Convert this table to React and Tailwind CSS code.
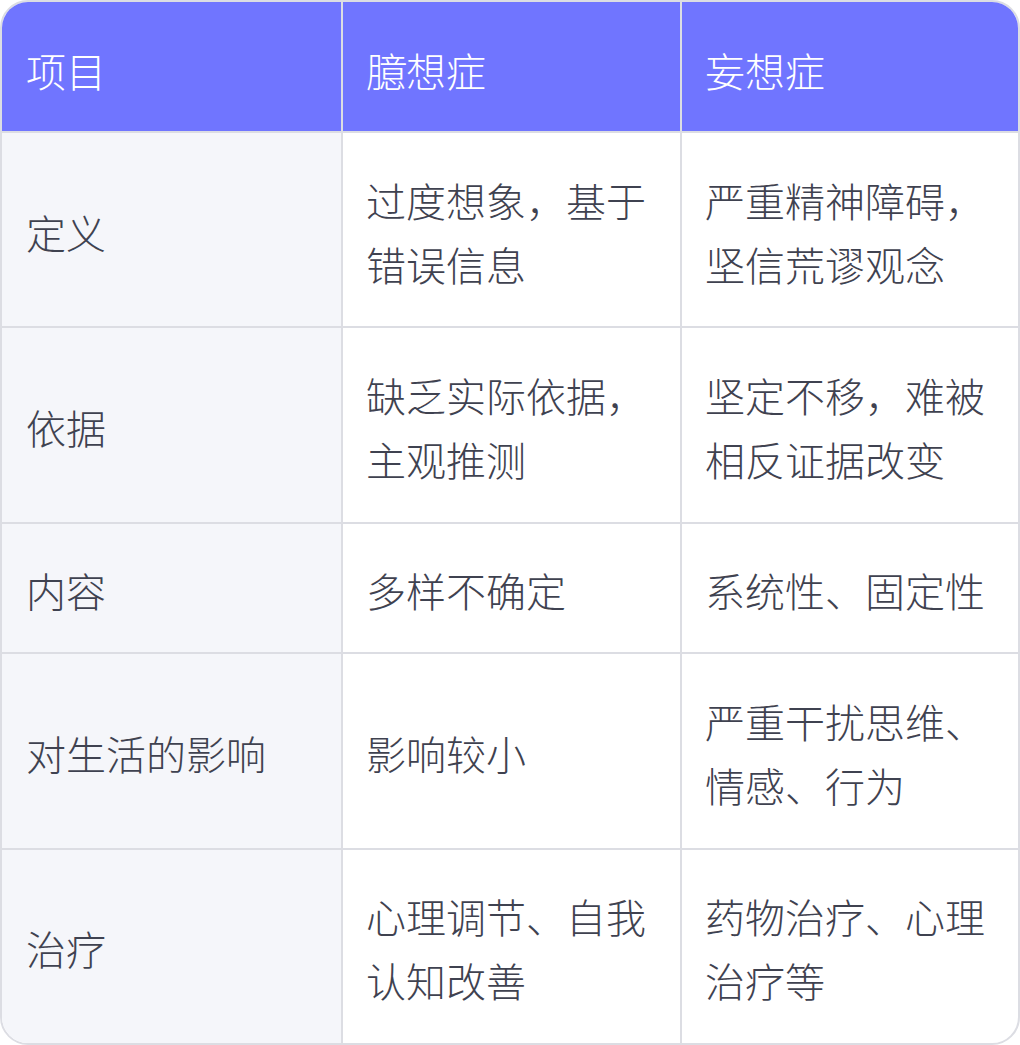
const rows = [
  ['定义', '过度想象，基于错误信息', '严重精神障碍，坚信荒谬观念'],
  ['依据', '缺乏实际依据，主观推测', '坚定不移，难被相反证据改变'],
  ['内容', '多样不确定', '系统性、固定性'],
  ['对生活的影响', '影响较小', '严重干扰思维、情感、行为'],
  ['治疗', '心理调节、自我认知改善', '药物治疗、心理治疗等'],
]

export default function App() {
  return (
    <div className="w-[1020px] h-[1045px] bg-white">
      <div
        className="w-full h-full border-[2px] border-[#dcdde3] rounded-[28px] overflow-hidden"
        style={{ fontFamily: '"Noto Sans CJK SC", "Noto Sans", sans-serif' }}
      >
        <table className="w-full h-full table-fixed border-separate border-spacing-0 text-[40px] leading-[64px] font-light text-[#3f4250]">
          <colgroup>
            <col className="w-[339px]" />
            <col className="w-[339px]" />
            <col />
          </colgroup>
          <thead>
            <tr className="h-[131px] bg-[#7075ff] text-white">
              <th className="font-light text-left align-middle pl-[24px] pr-[20px] pt-[35px] pb-[29px] border-b-[2px] border-[#dcdde3]">项目</th>
              <th className="font-light text-left align-middle pl-[23px] pr-[20px] pt-[35px] pb-[29px] border-b-[2px] border-l-[2px] border-[#dcdde3]">臆想症</th>
              <th className="font-light text-left align-middle pl-[23px] pr-[20px] pt-[35px] pb-[29px] border-b-[2px] border-l-[2px] border-[#dcdde3]">妄想症</th>
            </tr>
          </thead>
          <tbody>
            {rows.map((r, i) => (
              <tr key={r[0]}>
                <td className={`bg-[#f5f6fa] pl-[24px] pr-[20px] pt-[34px] pb-[30px] align-middle border-[#dcdde3] ${i < rows.length - 1 ? 'border-b-[2px]' : ''}`}>{r[0]}</td>
                <td className={`pl-[23px] pr-[20px] pt-[34px] pb-[30px] align-middle border-l-[2px] border-[#dcdde3] ${i < rows.length - 1 ? 'border-b-[2px]' : ''}`}>{r[1]}</td>
                <td className={`pl-[23px] pr-[20px] pt-[34px] pb-[30px] align-middle border-l-[2px] border-[#dcdde3] ${i < rows.length - 1 ? 'border-b-[2px]' : ''}`}>{r[2]}</td>
              </tr>
            ))}
          </tbody>
        </table>
      </div>
    </div>
  )
}
